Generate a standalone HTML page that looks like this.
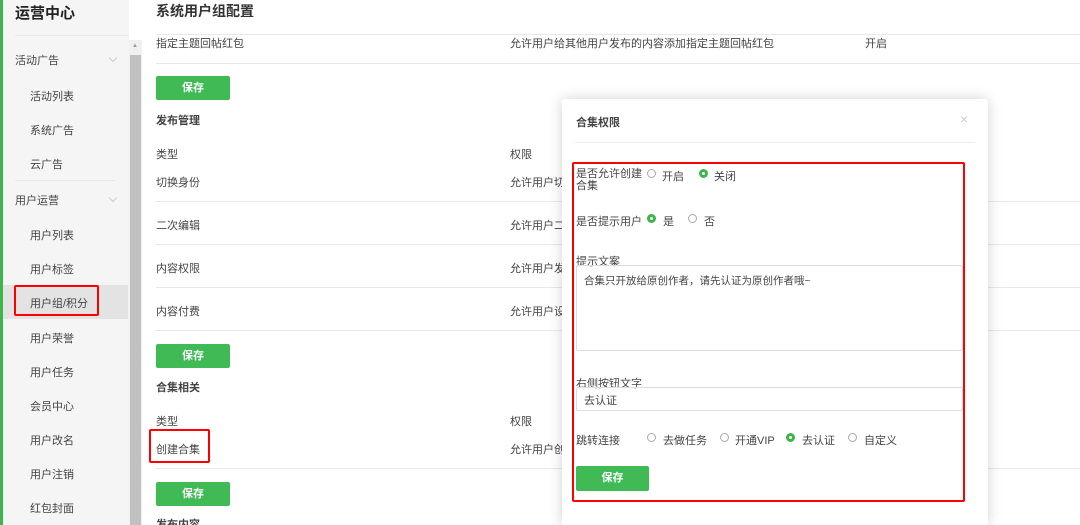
<!DOCTYPE html>
<html style="width:1080px;height:525px;overflow:hidden"><head><meta charset="utf-8"><style>
*{margin:0;padding:0;box-sizing:border-box}
body{width:1080px;height:525px;overflow:hidden;background:#fff;font-family:"Liberation Sans","Noto Sans CJK SC",sans-serif;font-size:11px;color:#444;position:relative}
.a{position:absolute;white-space:nowrap}
.side{position:absolute;left:0;top:0;width:129px;height:525px;background:#f5f5f5}
.green{position:absolute;left:0;top:0;width:3px;height:525px;background:#3cb54a}
.line{position:absolute;height:1px;background:#e8e8e8}
.btn{position:absolute;background:#3fba55;color:#fff;font-weight:bold;text-align:center;border-radius:2px;font-size:11px}
.r{position:absolute;width:9px;height:9px;border:1px solid #aaa;border-radius:50%;background:#fff}
.r.on{border:3px solid #3cb54a}
.chev{position:absolute;width:6px;height:6px;border-right:1px solid #ccc;border-bottom:1px solid #ccc;transform:rotate(45deg)}
</style></head><body>
<div class="side"></div><div class="green"></div>
<div class="a" style="left:15px;top:2px;font-size:15px;font-weight:bold;color:#222">运营中心</div>
<div class="line" style="left:15px;top:35px;width:114px"></div>
<div class="a" style="left:15px;top:52px">活动广告</div><div class="chev" style="left:110px;top:55px"></div>
<div class="a" style="left:30px;top:88px">活动列表</div>
<div class="a" style="left:30px;top:122px">系统广告</div>
<div class="a" style="left:30px;top:156px">云广告</div>
<div class="line" style="left:15px;top:180px;width:100px"></div>
<div class="a" style="left:15px;top:192px">用户运营</div><div class="chev" style="left:110px;top:195px"></div>
<div class="a" style="left:30px;top:227px">用户列表</div>
<div class="a" style="left:30px;top:261px">用户标签</div>
<div style="position:absolute;left:3px;top:285px;width:125px;height:34px;background:#e3e3e3"></div>
<div class="a" style="left:30px;top:295px">用户组/积分</div>
<div style="position:absolute;left:14px;top:285px;width:85px;height:31px;border:2px solid #f00;border-radius:2px"></div>
<div class="a" style="left:30px;top:330px">用户荣誉</div>
<div class="a" style="left:30px;top:364px">用户任务</div>
<div class="a" style="left:30px;top:398px">会员中心</div>
<div class="a" style="left:30px;top:432px">用户改名</div>
<div class="a" style="left:30px;top:466px">用户注销</div>
<div class="a" style="left:30px;top:500px">红包封面</div>
<div style="position:absolute;left:129px;top:40px;width:13px;height:485px;background:#f0f0f0"></div>
<div style="position:absolute;left:130px;top:55px;width:11px;height:470px;background:#c1c1c1"></div>
<div class="a" style="left:132px;top:43px;font-size:6px;color:#999">▲</div>

<div class="a" style="left:156px;top:1px;font-size:14px;font-weight:bold;color:#333">系统用户组配置</div>
<div class="line" style="left:156px;top:34px;width:924px"></div>
<div class="a" style="left:156px;top:35px">指定主题回帖红包</div>
<div class="a" style="left:510px;top:35px">允许用户给其他用户发布的内容添加指定主题回帖红包</div>
<div class="a" style="left:865px;top:35px">开启</div>
<div class="line" style="left:156px;top:63px;width:924px"></div>
<div class="btn" style="left:156px;top:76px;width:74px;height:24px;line-height:24px">保存</div>
<div class="a" style="left:156px;top:112px;font-weight:bold">发布管理</div>
<div class="a" style="left:156px;top:146px">类型</div><div class="a" style="left:510px;top:146px">权限</div>
<div class="a" style="left:156px;top:174px">切换身份</div><div class="a" style="left:510px;top:174px">允许用户切</div>
<div class="line" style="left:156px;top:201px;width:924px"></div>
<div class="a" style="left:156px;top:217px">二次编辑</div><div class="a" style="left:510px;top:217px">允许用户二</div>
<div class="line" style="left:156px;top:244px;width:924px"></div>
<div class="a" style="left:156px;top:260px">内容权限</div><div class="a" style="left:510px;top:260px">允许用户发</div>
<div class="line" style="left:156px;top:287px;width:924px"></div>
<div class="a" style="left:156px;top:303px">内容付费</div><div class="a" style="left:510px;top:303px">允许用户设</div>
<div class="line" style="left:156px;top:330px;width:924px"></div>
<div class="btn" style="left:156px;top:344px;width:74px;height:24px;line-height:24px">保存</div>
<div class="a" style="left:156px;top:379px;font-weight:bold">合集相关</div>
<div class="a" style="left:156px;top:413px">类型</div><div class="a" style="left:510px;top:413px">权限</div>
<div class="a" style="left:156px;top:441px">创建合集</div><div class="a" style="left:510px;top:441px">允许用户创</div>
<div style="position:absolute;left:149px;top:429px;width:61px;height:34px;border:2px solid #f00;border-radius:2px"></div>
<div class="line" style="left:156px;top:468px;width:924px"></div>
<div class="btn" style="left:156px;top:482px;width:74px;height:24px;line-height:24px">保存</div>
<div class="a" style="left:156px;top:516px;font-weight:bold">发布内容</div>

<div style="position:absolute;left:562px;top:99px;width:426px;height:426px;background:#fff;border-radius:3px 3px 0 0;box-shadow:0 0 14px rgba(0,0,0,.18)"></div>
<div class="a" style="left:576px;top:114px;font-weight:bold">合集权限</div>
<div class="a" style="left:960px;top:111px;font-size:14px;color:#ccc">×</div>
<div class="line" style="left:575px;top:142px;width:400px;background:#eee"></div>
<div style="position:absolute;left:572px;top:162px;width:393px;height:340px;border:2px solid #f00;border-radius:2px"></div>
<div class="a" style="left:576px;top:168px;line-height:12px">是否允许创建<br>合集</div>
<div class="r" style="left:647px;top:169px"></div><div class="a" style="left:662px;top:168px">开启</div>
<div class="r on" style="left:699px;top:169px"></div><div class="a" style="left:714px;top:168px">关闭</div>
<div class="a" style="left:576px;top:213px">是否提示用户</div>
<div class="r on" style="left:647px;top:214px"></div><div class="a" style="left:663px;top:213px">是</div>
<div class="r" style="left:688px;top:214px"></div><div class="a" style="left:704px;top:213px">否</div>
<div class="a" style="left:576px;top:253px">提示文案</div>
<div style="position:absolute;left:576px;top:265px;width:387px;height:86px;border:1px solid #ddd;border-radius:2px"></div>
<div class="a" style="left:584px;top:273px;font-size:10.5px">合集只开放给原创作者，请先认证为原创作者哦~</div>
<div class="a" style="left:576px;top:375px">右侧按钮文字</div>
<div style="position:absolute;left:576px;top:387px;width:387px;height:24px;border:1px solid #ddd;border-radius:2px"></div>
<div class="a" style="left:584px;top:392px">去认证</div>
<div class="a" style="left:576px;top:432px">跳转连接</div>
<div class="r" style="left:647px;top:433px"></div><div class="a" style="left:663px;top:432px">去做任务</div>
<div class="r" style="left:720px;top:433px"></div><div class="a" style="left:735px;top:432px">开通VIP</div>
<div class="r on" style="left:786px;top:433px"></div><div class="a" style="left:802px;top:432px">去认证</div>
<div class="r" style="left:848px;top:433px"></div><div class="a" style="left:864px;top:432px">自定义</div>
<div class="btn" style="left:576px;top:466px;width:73px;height:25px;line-height:25px">保存</div>
</body></html>
